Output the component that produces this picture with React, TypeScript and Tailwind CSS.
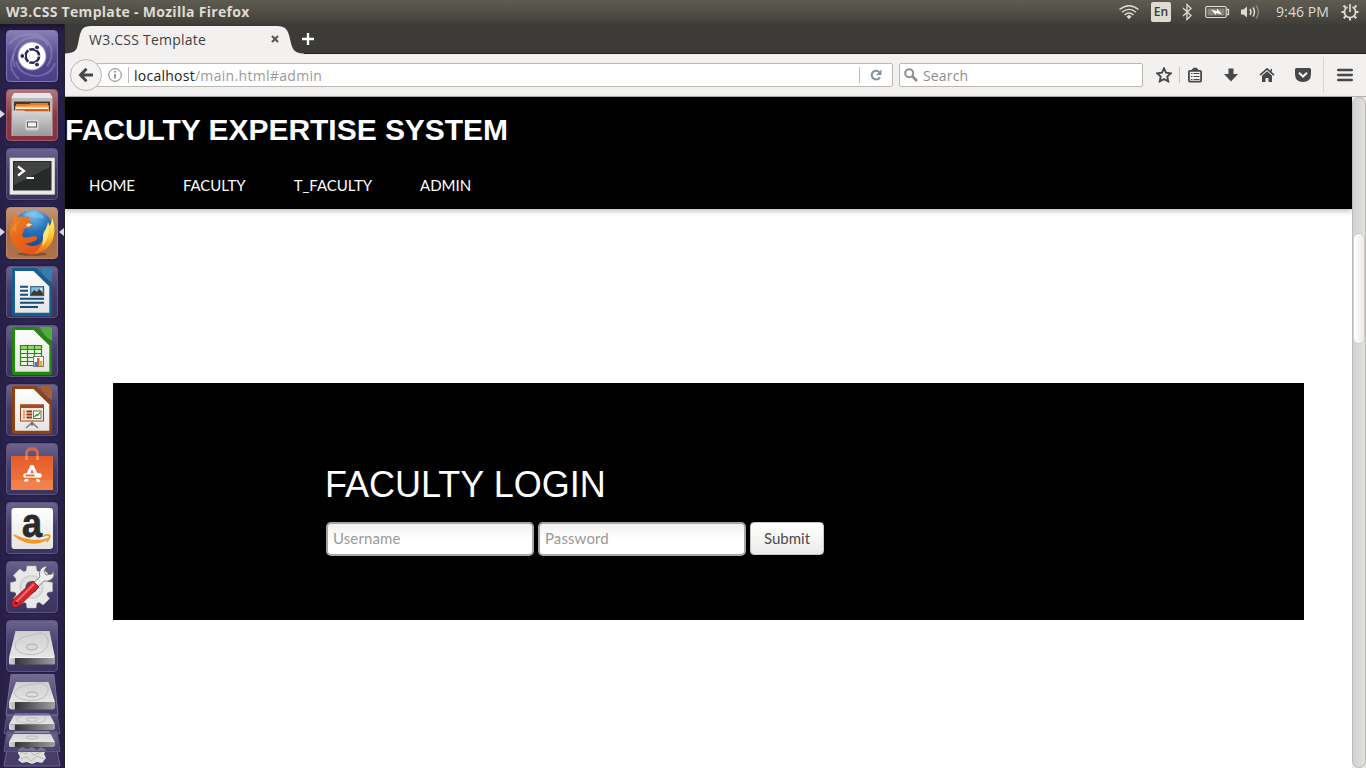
import React from "react";

function Tile({
  children,
  tone = "glass",
  left = false,
  right = false,
}: {
  children: React.ReactNode;
  tone?: string;
  left?: boolean;
  right?: boolean;
}) {
  const tones: Record<string, string> = {
    glass: "bg-linear-to-b from-[#6a638c] via-[#443c69] to-[#3b3360] border-[#5d557f]",
    dash: "bg-linear-to-b from-[#8880b4] via-[#554b91] to-[#4b4088] border-[#8178ad]",
    files: "bg-linear-to-b from-[#b4767f] via-[#8b3843] to-[#833440] border-[#a35862]",
    fox: "bg-linear-to-b from-[#c39677] via-[#a86d47] to-[#ad734c] border-[#bd8a68]",
  };
  return (
    <div className="relative flex w-full justify-center">
      {left && <span className="absolute top-[21px] left-0 h-0 w-0 border-y-[4px] border-l-[5px] border-y-transparent border-l-[#d9d7df]" />}
      {right && <span className="absolute top-[21px] right-0 h-0 w-0 border-y-[4px] border-r-[5px] border-y-transparent border-r-[#d9d7df]" />}
      <div className={"size-[52px] rounded-[4px] border shadow-[0_0_2px_#16102e] " + tones[tone]}>
        <svg viewBox="1 1 50 50" className="block size-[50px] overflow-visible">{children}</svg>
      </div>
    </div>
  );
}

function DocFrame({ color, light, children }: { color: string; light: string; children: React.ReactNode }) {
  return (
    <>
      <path d="M8 2H30L46 18.500V48Q46 50 44 50H8Q6 50 6 48V4Q6 2 8 2Z" fill={color} />
      <path d="M34 2H44Q46 2 46 4V16Q37 11 34 2Z" fill={light} />
      <path d="M9 5H27.500L43.300 20.500V46.700H9Z" fill="url(#paper)" />
      {children}
    </>
  );
}

function Launcher() {
  return (
    <aside className="relative flex w-[65px] shrink-0 flex-col gap-[7px] overflow-hidden border-r border-[#22212a] bg-linear-to-r from-[#2a2149] via-[#2e2553] to-[#292048] pt-[6px] shadow-[inset_0_8px_8px_-6px_#120d22]">
      <svg className="absolute size-0">
        <defs>
          <linearGradient id="paper" x1="0" y1="0" x2="0" y2="1"><stop stopColor="#fff" /><stop offset="1" stopColor="#e4e4e4" /></linearGradient>
          <linearGradient id="metal" x1="0" y1="0" x2="0" y2="1"><stop stopColor="#d6d6d6" /><stop offset="1" stopColor="#999" /></linearGradient>
          <linearGradient id="bag" x1="0" y1="0" x2="0" y2="1"><stop stopColor="#e25c2a" /><stop offset="1" stopColor="#f37b42" /></linearGradient>
          <linearGradient id="diskTop" x1="0" y1="0" x2="0" y2="1"><stop stopColor="#cfcfcf" /><stop offset="1" stopColor="#e6e6e6" /></linearGradient>
          <linearGradient id="diskSide"><stop stopColor="#d8d8d8" /><stop offset=".12" stopColor="#bbb" /><stop offset=".13" stopColor="#333" /><stop offset="1" stopColor="#a0a0a0" /></linearGradient>
          <linearGradient id="pile" x1="0" y1="0" x2="0" y2="1"><stop stopColor="#8c86a6" stopOpacity=".75" /><stop offset="1" stopColor="#473d6d" stopOpacity=".7" /></linearGradient>
          <linearGradient id="fur" x1="0" y1="0" x2="1" y2="1"><stop stopColor="#ee8a25" /><stop offset=".4" stopColor="#e9661c" /><stop offset="1" stopColor="#dc4a18" /></linearGradient>
          <radialGradient id="globe" cx=".5" cy=".1" r=".9"><stop stopColor="#7cc3ee" /><stop offset=".45" stopColor="#2873b9" /><stop offset="1" stopColor="#153b7a" /></radialGradient>
          <linearGradient id="flame" x1="0" y1="0" x2="0" y2="1"><stop stopColor="#fdf18a" /><stop offset=".5" stopColor="#fbc62e" /><stop offset="1" stopColor="#e8661c" /></linearGradient>
        </defs>
      </svg>

      <Tile tone="dash">
        <g fill="none" stroke="#aaa3cf" strokeOpacity=".4" strokeWidth="1.800">
          <path d="M3 14C14 1 36 1 44 15c3 6 2 15-3 21" />
          <path d="M9 37C4 26 9 12 22 8c9-3 18 2 20 8" />
          <path d="M13 49C3 41 4 31 8 24" />
          <path d="M49 33C46 44 31 50 19 43 14 41 11 36 10 31" />
        </g>
        <circle cx="26" cy="26" r="14.500" fill="#8f87bd" />
        <circle cx="26" cy="26" r="13.500" fill="#fff" />
        <circle cx="26.300" cy="26" r="6.800" fill="none" stroke="#2f2458" strokeWidth="2.600" />
        <g fill="#2f2458" stroke="#fff" strokeWidth="1"><circle cx="16.300" cy="26" r="2.400" /><circle cx="31" cy="17.400" r="2.400" /><circle cx="31" cy="34.600" r="2.400" /></g>
        <path d="M30.500 26H35M24.300 29.500 22 33.500M24.300 22.500 22 18.500" stroke="#fff" strokeWidth="1.200" />
      </Tile>

      <Tile tone="files" left>
        <path d="M8 4H44L46.500 8V47H5.500V8Z" fill="#bcbcbc" />
        <path d="M8 4H44L46.500 9H5.500Z" fill="#e6e6e6" />
        <path d="M8 12.500H44V24H8Z" fill="#3e3935" />
        <path d="M10 15H23L25 14H42V25H10Z" fill="#e77a25" />
        <path d="M9 17H20L22 16.500H43V25H9Z" fill="#f5a85a" />
        <path d="M10 18.500H42V20H10Z" fill="#fff4d9" />
        <path d="M10 20H42V22.500H10Z" fill="#d65c1c" />
        <path d="M7.500 21.500H18L20 22.500H44.500L45.500 24V47H6.500V22.500Z" fill="url(#metal)" />
        <rect x="19.500" y="30.500" width="13" height="10.500" rx="2" fill="#ddd" stroke="#c9c9c9" />
        <rect x="21.500" y="33" width="9" height="5" fill="#f7f7f7" stroke="#555" />
      </Tile>

      <Tile>
        <rect x="3.500" y="9.500" width="45.500" height="37.500" rx="1" fill="#a9a9a9" />
        <rect x="4" y="10" width="44.500" height="36" fill="#e9e9e9" />
        <rect x="7" y="13" width="38.500" height="29.500" fill="#272a29" />
        <path d="M8 14H44V19L8 37Z" fill="#404341" />
        <path d="m12 18.500 6 4.500-6 4.500M20.500 30H28" fill="none" stroke="#fff" strokeWidth="2.200" />
      </Tile>

      <Tile tone="fox" left right>
        <ellipse cx="26" cy="47" rx="15" ry="1.800" fill="#512d20" opacity=".5" />
        <circle cx="27" cy="24" r="21" fill="url(#globe)" />
        <path d="M17 8c4-4 9-3 13-4 5 2 8 5 8 8-5-2-9 0-12-3-3 2-6 0-9-1Z" fill="#8ccced" opacity=".45" />
        <path d="M9 5C9 7 10 9 12 10 15 9 18 9.500 20 11 21 10 22 9 23 9 22.500 12 23 14 24 15L27 18C26 20 22 20 20 21 18 22 17 23 17.500 25 16 26 16 28 17 30 21 32 26 28 30 29.500 33 31 30 34 26 35 23 36 21 37 18.500 36.500 26 41 34 39 37 33 39 29 39 26 40 23L47 27C46 39 38 47.500 26 47.500 13 47.500 4 37 4 25.500 4 20 5 16 8 12.500 7 9 8 6 9 5Z" fill="url(#fur)" />
        <path d="M46 11C50 20 49 31 44 38 39 44 33 47 27 47 34 42 37 37 37 30 37 25 41 22 42 15L43.500 19C45 17 46 14 46 11Z" fill="url(#flame)" />
        <path d="M42 17C44 25 42 33 36 40 38 34 36 29 38 25 40 23 42 20 42 17Z" fill="#fdeb83" opacity=".8" />
        <path d="M6 23c1-5 4-8 8-9-3 3-5 7-3 12-2-2-3-3-5-3Z" fill="#f6a53c" opacity=".45" />
        <path d="M20 18c1-2 4-2 6-.500L22 20Z" fill="#fce4c0" />
      </Tile>

      <Tile>
        <DocFrame color="#116091" light="#2f7fb2">
          <path d="M14 20.700H22M14 24.700H22M14 28.700H22M14 32.700H38M14 36.700H38M14 41H32" stroke="#174e79" strokeWidth="2" />
          <rect x="24.700" y="20.700" width="13" height="9" fill="#7fc0e7" stroke="#174e79" />
          <path d="m25 28 3-4 3 2 2-3 4 4v2H25Z" fill="#3b3933" /><circle cx="35" cy="23" r="1" fill="#fff59c" />
        </DocFrame>
      </Tile>

      <Tile>
        <DocFrame color="#20890b" light="#50ad38">
          <path d="M14.500 20.500H35.500V40.500H14.500Z" fill="#e9f8e1" />
          <path d="M14.500 20.500H35.500V24H14.500Z" fill="#8edb6d" />
          <path d="M14.500 20.500H35.500V40.500H14.500ZM14.500 24.500H35.500M14.500 28.500H35.500M14.500 32.500H35.500M14.500 36.500H35.500M21.500 20.500V40.500M28.500 20.500V40.500" fill="none" stroke="#268813" strokeWidth="1.200" />
          <rect x="27.500" y="31.500" width="10" height="10" fill="#fff" stroke="#777" />
          <path d="M28.500 37h2.500v4h-2.500z" fill="#2282cf" /><path d="M31 33h2.500v8H31z" fill="#e25d1d" /><path d="M34 36h2.500v5H34z" fill="#edae20" />
        </DocFrame>
      </Tile>

      <Tile>
        <DocFrame color="#91420e" light="#a65f34">
          <path d="M26 37.500V41M26 38.500 20 44M26 38.500 32 44M25 41h2" stroke="#777" strokeWidth="1.600" />
          <rect x="14.500" y="21" width="23" height="16" fill="#fbe6d7" stroke="#9d441b" />
          <path d="M14 20.500H38V24H14Z" fill="#a84b20" />
          <path d="M17 27.500H19M17 30.500H19M17 33.500H19" stroke="#db8760" strokeWidth="2" />
          <path d="M20.500 27.500H26M20.500 30.500H26M20.500 33.500H26" stroke="#8e3917" strokeWidth="2" />
          <rect x="27.500" y="27" width="7.500" height="7.500" fill="#fff" stroke="#687068" />
          <path d="m28.500 33 2-2.500 1 1 2.500-3" fill="none" stroke="#30a52f" strokeWidth="1.300" />
        </DocFrame>
      </Tile>

      <Tile>
        <path d="M5 13H47V47H5Z" fill="url(#bag)" />
        <path d="M5 37H47V47H5Z" fill="#f58b54" opacity=".5" />
        <path d="M20.500 17V9L23 6H29L31.500 9V17" fill="none" stroke="#d3694a" strokeWidth="2.800" />
        <path d="M19 13h3v4h-3zM30 13h3v4h-3z" fill="#f08a60" />
        <path d="M24.500 22H27.500L33 34H29L26 26 23 34H19Z" fill="#fff" />
        <path d="M19.500 32.500H33.500" stroke="#fff" strokeWidth="4.600" strokeLinecap="round" />
        <path d="M19.500 32.500H28.500" stroke="#e8672e" strokeWidth="1.800" /><path d="M17.500 38.500 19 36H22.500L22 38.500ZM30 36H33L34.500 39H31Z" fill="#fff" />
      </Tile>

      <Tile>
        <rect x="5.500" y="6" width="41.500" height="41" rx="3" fill="url(#paper)" />
        <text x="26" y="34.500" textAnchor="middle" fontFamily="'Liberation Sans', sans-serif" fontWeight="700" fontSize="40" textLength="20" lengthAdjust="spacingAndGlyphs" fill="#292929" stroke="#292929" strokeWidth=".8">a</text>
        <path d="M8 33C19 43 33 43 42 36.500 33 40 20 39 8 33Z" fill="#f7981d" stroke="#f7981d" strokeWidth="1.300" />
        <path d="M37 34.200Q42 32 43.500 33.500Q44 36 40.500 40" fill="none" stroke="#f7981d" strokeWidth="1.800" />
      </Tile>

      <Tile>
        <g transform="translate(25.500 26)">
          {[0, 45, 90, 135, 180, 225, 270, 315].map((a) => (
            <path key={a} d="M-5.500-15 -4.500-21H4.500L5.500-15Z" transform={`rotate(${a})`} fill="#e8e8e6" stroke="#bbb" strokeWidth=".5" />
          ))}
          <circle r="17" fill="#e9e9e7" /><circle r="12" fill="#cfcfcf" /><circle r="10.500" fill="#e1e1e1" /><circle r="6" fill="#55506a" />
        </g>
        <path d="M34 16C32 10 36 5 41 5L38 10 40 14 46 13 47 10C50 16 45 21 38 20L26 31 21 27Z" fill="#eee" stroke="#6c6c6c" strokeWidth=".8" />
        <path d="m27 20 6 6L13 45c-4 4-10-1-6-6Z" fill="#d3262c" stroke="#8e1018" strokeWidth=".8" />
        <path d="M28 23 10 41" stroke="#f1696b" strokeWidth="2" /><circle cx="10" cy="42" r="1.300" fill="#6a0a12" />
      </Tile>

      <Tile>
        <path d="M9.500 11H43.500L49 37.500H3Z" fill="url(#diskTop)" />
        <path d="M3 37.500H49V43Q49 44.500 47 44.500H5Q3 44.500 3 43Z" fill="url(#diskSide)" />
        <g fill="none" stroke="#bcbcbc"><path d="M11 30C6 24 12 18 22 16L34 13C43 14 44 23 40 28 35 36 18 37 11 30Z" /><ellipse cx="26" cy="27" rx="5.500" ry="3" fill="#dadada" stroke="#aaa" /></g>
        <path d="M4 37.500H48" stroke="#f5f5f5" />
      </Tile>

      <svg className="-mt-[5px] block h-[94px] w-[64px] shrink-0" viewBox="0 0 64 94">
        <path d="M7 75H57L60 92H4Z" fill="#463d69" stroke="#6b648a" />
        <path d="m18 76 4-3 5 2 5-2 5 3 4-3 5 3-2 4 2 4-4 5-5-1-5 2-5-2-5 1-4-3 2-3-2-4Z" fill="#dededb" />
        <path d="m20 78 6 2 3-4 5 5 7-3M20 85l7-2 4 4 6-5 7 3" stroke="#b9bab8" fill="none" />
        <path d="M7 57H57L60 77.500H4Z" fill="url(#pile)" stroke="#5f577f" />
        <path d="M15 57H49L55 68H9Z" fill="url(#diskTop)" /><path d="M9 68H55V72L53 73H10L9 72Z" fill="url(#diskSide)" />
        <ellipse cx="32" cy="63.500" rx="6" ry="1.500" fill="none" stroke="#bbb" />
        <path d="M7 40H57L60 59.500H4Z" fill="url(#pile)" fillOpacity=".7" stroke="#5f577f" />
        <path d="M15 39H49L55 50.500H9Z" fill="url(#diskTop)" /><path d="M9 50.500H55V55L53 56H10L9 55Z" fill="url(#diskSide)" />
        <path d="M17 47Q15 42 28 40.500H43Q49 46 41 48.500 27 51 17 47Z" fill="none" stroke="#c0c0c0" /><ellipse cx="32" cy="45.500" rx="6" ry="1.800" fill="none" stroke="#bbb" />
        <path d="M11 .5H54L58 41H6Z" fill="url(#pile)" stroke="#756e93" />
        <path d="M16 8H48.500L55 28H9Z" fill="url(#diskTop)" /><path d="M9 28H55V34L53 35.500H11L9 34Z" fill="url(#diskSide)" />
        <path d="M16 22C12 17 18 13 28 11L39 9C49 10 50 16 45 22 39 28 23 28 16 22Z" fill="none" stroke="#bcbcbc" /><ellipse cx="32" cy="20.500" rx="6" ry="2.500" fill="none" stroke="#aaa" />
      </svg>
    </aside>
  );
}

function StatusBar() {
  return (
    <header className="flex h-6 shrink-0 items-center bg-linear-to-b from-[#5e5c51] via-[#504e47] to-[#3f3e39] pr-[7px] pl-[6px] font-['Open_Sans',sans-serif] text-[#dfdbd2]">
      <h1 className="text-[14px] leading-6 font-bold tracking-[0.3px] whitespace-nowrap">W3.CSS Template - Mozilla Firefox</h1>
      <svg className="ml-auto" width="22" height="18" viewBox="0 0 22 18" fill="none" stroke="#dfdbd2" strokeWidth="1.400">
        <path d="M1.500 6.500Q11-1 20.500 6.500M4 9.300Q11 3.500 18 9.300M6.500 12Q11 8 15.500 12" /><path d="m8.500 13.500 2.500-1.700 2.500 1.700-2.500 2.700Z" fill="#dfdbd2" stroke="none" />
      </svg>
      <span className="ml-[11px] flex h-5 w-5 items-center justify-center rounded-[2px] bg-[#dfdbd2] text-[12px] font-semibold text-[#3c3b37]">En</span>
      <svg className="ml-[9px]" width="14" height="18" viewBox="0 0 14 18" fill="none" stroke="#dfdbd2" strokeWidth="1.300"><path d="m3 5 8 7.500L7 16.500v-15L11 5.500 3 13" /></svg>
      <svg className="ml-[11px]" width="25" height="14" viewBox="0 0 25 14">
        <rect x=".7" y="1.500" width="20.500" height="11" rx="1.500" fill="none" stroke="#dfdbd2" strokeWidth="1.200" /><rect x="2.500" y="3.500" width="17" height="7" fill="#88857c" /><path d="M22 4.500h1.500v5H22" fill="none" stroke="#dfdbd2" strokeWidth="1.300" />
        <path d="m6 4.500 6 1.700V3.500l5 6-6-1.500v2Z" fill="#fff" />
      </svg>
      <svg className="ml-[10px]" width="21" height="16" viewBox="0 0 21 16" fill="none" stroke="#dfdbd2" strokeWidth="1.500"><path d="M1 5.500h2.500L7 2.500v11l-3.500-3H1Z" fill="#dfdbd2" stroke="none" /><path d="M10 5Q12 8 10 11M13 3.500Q16 8 13 12.500" /><path d="M16 1.500Q21 8 16 14.500" stroke="#89867c" /></svg>
      <span className="ml-[15px] w-[54px] text-[14px] leading-5 tracking-[0.1px] whitespace-nowrap">9:46 PM</span>
      <svg className="ml-[11px]" width="18" height="18" viewBox="0 0 18 18" fill="none" stroke="#dfdbd2">
        <path d="M6.500 4A5.600 5.600 0 1 0 11.500 4" strokeWidth="1.700" /><path d="M9 1v8" strokeWidth="1.700" />
        <path d="M4.500 4.500 2.500 2.500M13.500 4.500l2-2M3.500 9H.5M14.500 9h3M5 13l-2.300 2.300M13 13l2.300 2.300M9 14.500v3" strokeWidth="2" />
      </svg>
    </header>
  );
}

function TabStrip() {
  return (
    <div className="relative flex h-[30px] shrink-0 items-center border-b border-[#252420] bg-[#3c3b37] font-['Open_Sans',sans-serif]">
      <svg className="absolute top-[2px] left-0" width="240" height="28" viewBox="0 0 240 28"><path d="M0 28V27.500C13 27 12 22 14 13 16 3 18 0 26 0H212C220 0 223 3 225 13 227 22 228 27.500 239 27.500V28Z" fill="#f2f1f0" /></svg>
      <div className="relative flex h-full w-[238px] items-center pt-px pr-[24px] pl-[24px]">
        <span className="text-[14px] tracking-[0.23px] whitespace-nowrap text-[#3f3f3f]">W3.CSS Template</span>
        <svg className="ml-auto" width="8" height="8" viewBox="0 0 8 8"><path d="m1 1 6 6M7 1 1 7" stroke="#555" strokeWidth="2.100" /></svg>
      </div>
      <svg className="relative -ml-[2px]" width="14" height="14" viewBox="0 0 14 14"><path d="M7 1v12M1 7h12" stroke="#fff" strokeWidth="2.400" /></svg>
    </div>
  );
}

function Toolbar() {
  return (
    <div className="flex h-[43px] shrink-0 items-center border-b border-[#b5b2ae] bg-[#f2f1f0] pr-[13px] pl-[5px] font-['Open_Sans',sans-serif] text-[14px]">
      <button className="relative z-10 flex size-8 shrink-0 items-center justify-center rounded-full border border-[#b9b6b2] bg-[#f4f3f2]">
        <svg width="16" height="16" viewBox="0 0 16 16" fill="none" stroke="#484848" strokeWidth="3"><path d="M15 8H3M8.500 1.800 2.500 8l6 6.200" /></svg>
      </button>
      <div className="-ml-[6px] flex h-6 w-[797px] items-center rounded-[2px] border border-[#bbb8b4] bg-white pl-[11px]">
        <svg width="14" height="14" viewBox="0 0 14 14"><circle cx="7" cy="7" r="6.300" fill="none" stroke="#7b7b7b" strokeWidth="1" /><path d="M7 6v4.500M7 3v1.600" stroke="#777" strokeWidth="1.500" /></svg>
        <span className="ml-[6px] h-4 w-px bg-[#bbb]" />
        <span className="ml-[5px] whitespace-nowrap text-[#999]"><span className="tracking-[0.25px] text-[#222]">localhost</span><span className="tracking-[0.32px]">/main.html#admin</span></span>
        <span className="ml-auto h-4 w-px bg-[#bbb]" />
        <svg className="mr-[10px] ml-[10px]" width="12" height="12" viewBox="0 0 12 12"><path d="M9.300 3A4.400 4.400 0 1 0 10 8.200" fill="none" stroke="#8293a0" strokeWidth="2" /><path d="M11.500.5V6H6Z" fill="#8293a0" /></svg>
      </div>
      <div className="ml-[6px] flex h-6 w-[244px] items-center rounded-[2px] border border-[#bbb8b4] bg-white pl-[4px]">
        <svg width="14" height="14" viewBox="0 0 14 14" fill="none" stroke="#8f8f8f"><circle cx="5.200" cy="5.200" r="4" strokeWidth="2" /><path d="m8 8 5 5" strokeWidth="2.600" /></svg>
        <span className="ml-[5px] tracking-[0.15px] text-[#8d8d8d]">Search</span>
      </div>
      <svg className="ml-[13px]" width="16" height="16" viewBox="0 0 16 16"><path d="m8 1.300 2 4.400 4.900.6-3.600 3.300.9 4.800L8 12l-4.200 2.400.9-4.800L1.100 6.300 6 5.700Z" fill="none" stroke="#484848" strokeWidth="1.900" /></svg>
      <span className="ml-[7px] h-4 w-px bg-[#c7c4c1]" />
      <svg className="ml-[8px]" width="14" height="16" viewBox="0 0 14 16" fill="none" stroke="#484848"><rect x=".9" y="3.900" width="12.200" height="10.700" rx="1" strokeWidth="1.800" /><path d="M3 3.500h8L8.500.8h-3Z" fill="#484848" stroke="none" /><path d="M3 6.500h1.500M5.500 6.500h6M3 9.500h1.500M5.500 9.500h6M3 12.500h1.500M5.500 12.500h6" strokeWidth="1" /></svg>
      <svg className="ml-[22px]" width="14" height="14" viewBox="0 0 14 14"><path d="M4.500.5h5V6H14L7 13.500 0 6h4.500Z" fill="#484848" /></svg>
      <svg className="ml-[21px]" width="16" height="14" viewBox="0 0 16 14"><path d="m1 7.200 7-6.400 7 6.400" fill="none" stroke="#484848" strokeWidth="1.600" /><path d="M11.500 1H13v3l-1.500-1ZM3 7.700l5-4.500 5 4.500V14H9.500v-4h-3v4H3Z" fill="#484848" /></svg>
      <svg className="ml-[20px]" width="16" height="14" viewBox="0 0 16 14"><path d="M1.500 0h13Q16 0 16 1.500V6Q16 14 8 14 0 14 0 6V1.500Q0 0 1.500 0Z" fill="#484848" /><path d="m4 4.800 4 3.700 4-3.700" fill="none" stroke="#f2f1f0" strokeWidth="2.100" /></svg>
      <span className="ml-[12px] h-[36px] w-px bg-[#dad8d5]" />
      <svg className="ml-auto" width="16" height="14" viewBox="0 0 16 14"><path d="M1.300 2h13.400M1.300 7h13.400M1.300 12h13.400" stroke="#484848" strokeWidth="2.600" strokeLinecap="round" /></svg>
    </div>
  );
}

const links = ["HOME", "FACULTY", "T_FACULTY", "ADMIN"];

const inputClass =
  "h-[34px] w-[208px] rounded-[5px] border-2 border-[#aaa5a2] bg-linear-to-b from-[#f1f1f1] to-white to-50% px-[5px] pb-[2px] text-[15px] tracking-[0.1px] placeholder:text-[#999]";

function Site() {
  return (
    <main className="flex min-w-0 flex-1 flex-col bg-white font-[Lato,sans-serif] text-[15px]">
      <div className="h-[112px] shrink-0 bg-black text-white shadow-[0_2px_5px_rgba(0,0,0,0.26)]">
        <h2 className="pt-[10px] font-['Liberation_Sans',sans-serif] text-[30px] leading-[45px] font-bold tracking-[-0.04px] whitespace-nowrap">FACULTY EXPERTISE SYSTEM</h2>
        <nav className="flex pt-[22px] tracking-[-0.04px]">
          {links.map((l) => <a key={l} className="px-6 leading-[23px]">{l}</a>)}
        </nav>
      </div>
      <section className="mx-12 mt-[174px] h-[237px] shrink-0 bg-black pt-[75px] pl-[212px] text-white">
        <h2 className="font-['Liberation_Sans',sans-serif] text-[36px] leading-[54px] whitespace-nowrap">FACULTY LOGIN</h2>
        <form className="mt-[10px] flex items-start gap-[4px] pl-px" onSubmit={(e) => e.preventDefault()}>
          <input placeholder="Username" className={inputClass} />
          <input type="password" placeholder="Password" className={inputClass} />
          <button className="h-[33px] w-[74px] rounded-[4px] border border-[#c9c7c5] bg-linear-to-b from-white to-[#ecebea] text-[15px] text-[#4c4c4c]">Submit</button>
        </form>
      </section>
    </main>
  );
}

export default function App() {
  return (
    <div className="flex h-[768px] w-[1366px] flex-col overflow-hidden">
      <StatusBar />
      <div className="flex min-h-0 flex-1">
        <Launcher />
        <div className="flex min-w-0 flex-1 flex-col">
          <TabStrip />
          <Toolbar />
          <div className="flex min-h-0 flex-1">
            <Site />
            <div className="w-[14px] shrink-0 bg-[#e9e8e6]">
              <div className="h-full rounded-[7px] border border-[#bcbab7] bg-linear-to-r from-[#d2d2d2] to-[#e0e0e0] pt-[135px]">
                <div className="h-[111px] rounded-full border border-[#d0cecb] bg-linear-to-r from-white to-[#ebeae9]" />
              </div>
            </div>
          </div>
        </div>
      </div>
    </div>
  );
}
